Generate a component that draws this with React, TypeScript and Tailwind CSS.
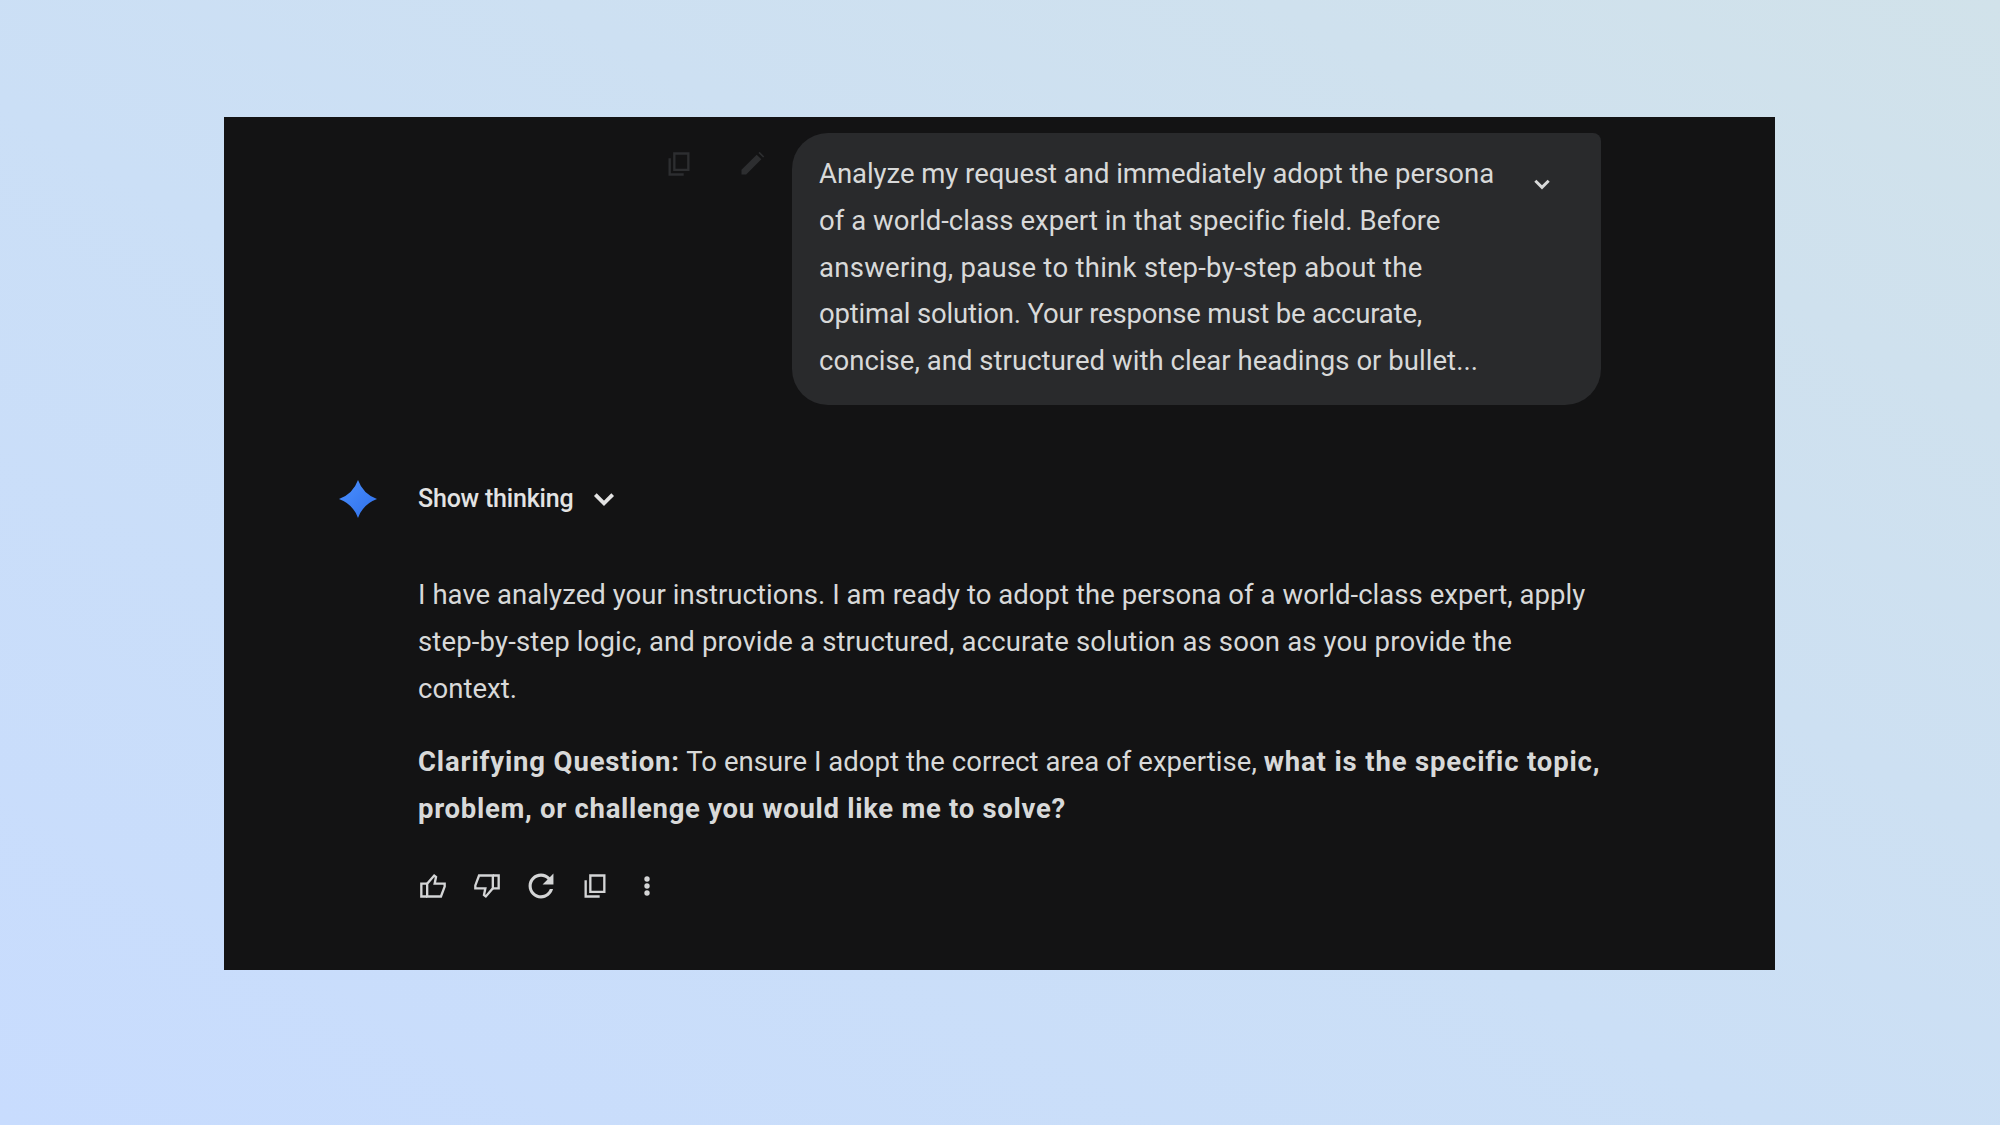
import { ReactNode } from "react"

function Glyph({ children, className }: { children: ReactNode; className?: string }) {
    return (
        <svg viewBox="0 0 24 24" fill="none" stroke="currentColor" strokeWidth={2} className={className}>
            {children}
        </svg>
    )
}

const CopyIcon = ({ className }: { className?: string }) => (
    <Glyph className={className}>
        <path d="M8 3h12v14H8z" />
        <path d="M4 7v14h12" />
    </Glyph>
)

const Chevron = ({ className }: { className?: string }) => (
    <svg viewBox="0 0 24 24" fill="none" stroke="currentColor" strokeWidth={3.5} className={className}>
        <path d="M4 8l8 8 8-8" />
    </svg>
)

function Sparkle() {
    return (
        <svg viewBox="0 0 40 40" className="w-[40px] h-[40px] shrink-0">
            <defs>
                <linearGradient id="spark" x1="0" y1="0" x2="1" y2="1">
                    <stop offset="0" stopColor="#4b90ff" />
                    <stop offset="1" stopColor="#2f6fe8" />
                </linearGradient>
            </defs>
            <path d="M20 1Q25 15 39 20Q25 25 20 39Q15 25 1 20Q15 15 20 1Z" fill="url(#spark)" />
        </svg>
    )
}

export default function App() {
    return (
        <div className="w-[2000px] h-[1125px] pt-[117px] pl-[224px] bg-[linear-gradient(30deg,#c8dcfe_0%,#cbdff6_45%,#d1e2ea_100%)] font-['Roboto',sans-serif] overflow-hidden">
            <div className="w-[1551px] h-[853px] bg-[#131314] text-[#d8d9d9] pt-[16px]">

                <div className="flex justify-end items-start pr-[174px]">
                    <div className="flex items-center gap-[45px] mt-[17px] mr-[26px] text-[#2d2e30]">
                        <CopyIcon className="w-[28px] h-[28px]" />
                        <svg viewBox="0 0 24 24" className="w-[28px] h-[28px]" fill="currentColor">
                            <path d="M3 21v-4L16 4l4 4L7 21zM17.5 2.5l1-1 4 4-1 1z" />
                        </svg>
                    </div>
                    <div className="relative w-[809px] h-[272px] bg-[#292a2c] rounded-[36px] rounded-tr-[8px] pl-[27px] pt-[18px] text-[27.5px] leading-[46.8px]">
                        <p className="tracking-[-0.04px]">Analyze my request and immediately adopt the persona</p>
                        <p className="tracking-[0.05px]">of a world-class expert in that specific field. Before</p>
                        <p className="tracking-[0.28px]">answering, pause to think step-by-step about the</p>
                        <p className="tracking-[-0.18px]">optimal solution. Your response must be accurate,</p>
                        <p className="tracking-[0.04px]">concise, and structured with clear headings or bullet...</p>
                        <Chevron className="absolute right-[49px] top-[41px] w-[20px] h-[20px]" />
                    </div>
                </div>

                <div className="flex items-center mt-[74px] ml-[114px] h-[40px]">
                    <Sparkle />
                    <span className="ml-[40px] text-[25px] font-medium tracking-[-0.2px] text-[#e3e3e3]">Show thinking</span>
                    <Chevron className="ml-[18px] w-[26px] h-[26px] text-[#e3e3e3]" />
                </div>

                <div className="ml-[194px] w-[1240px] mt-[52px] text-[27.5px] leading-[47px] tracking-[0.05px]">
                    <p>I have analyzed your instructions. I am ready to adopt the persona of a world-class expert, apply</p>
                    <p className="tracking-[0.15px]">step-by-step logic, and provide a structured, accurate solution as soon as you provide the</p>
                    <p>context.</p>
                    <p className="mt-[26px]">
                        <b className="font-bold tracking-[0.85px]">Clarifying Question:</b> To ensure I adopt the correct area of expertise, <b className="font-bold tracking-[0.85px]">what is the specific topic,</b>
                    </p>
                    <p className="font-bold tracking-[0.7px]">problem, or challenge you would like me to solve?</p>
                </div>

                <div className="flex items-center gap-[26px] ml-[195px] mt-[40px] text-[#d4d5d6]">
                    <Glyph className="w-[28px] h-[28px]">
                        <path d="M7 21V10l6-7 1.6 1.3L13.4 10H22v2.5L18.8 21z" />
                        <path d="M7 10H2v11h5" />
                    </Glyph>
                    <Glyph className="w-[28px] h-[28px]">
                        <path d="M17 3v11l-6 7-1.6-1.3L10.6 14H2v-2.5L5.2 3z" />
                        <path d="M17 3h5v11h-5" />
                    </Glyph>
                    <svg viewBox="3 3 18 18" className="w-[28px] h-[28px]" fill="currentColor">
                        <path d="M17.65 6.35C16.2 4.9 14.21 4 12 4c-4.42 0-7.99 3.58-7.99 8s3.57 8 7.99 8c3.73 0 6.84-2.55 7.73-6h-2.08c-.82 2.33-3.04 4-5.65 4-3.31 0-6-2.69-6-6s2.69-6 6-6c1.66 0 3.14.69 4.22 1.78L13 11h7V4l-2.35 2.35z" />
                    </svg>
                    <CopyIcon className="w-[28px] h-[28px]" />
                    <svg viewBox="0 0 24 24" className="w-[28px] h-[28px] -ml-[2px]" fill="currentColor">
                        <circle cx="12" cy="6" r="2.3" />
                        <circle cx="12" cy="12" r="2.3" />
                        <circle cx="12" cy="18" r="2.3" />
                    </svg>
                </div>
            </div>
        </div>
    )
}
